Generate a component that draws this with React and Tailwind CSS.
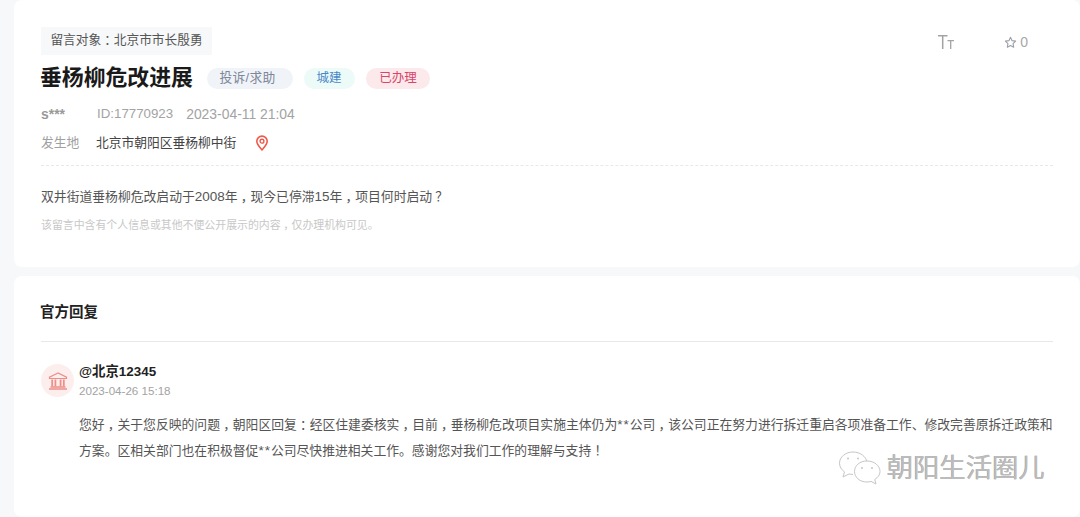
const font = { fontFamily: '"Liberation Sans", "Noto Sans CJK SC", sans-serif' };

function P({ children }) {
  return <span className="inline-block w-[1em] text-center [font-feature-settings:'halt']">{children}</span>;
}

function Wide({ children }) {
  return <span className="text-[13.500px]">{children}</span>;
}

function Stars() {
  return <span className="text-[13.500px] tracking-[1px]">**</span>;
}

function Pin() {
  return (
    <svg width="14" height="16" viewBox="0 0 14 16" fill="none">
      <path d="M7 15C4.2 11.8 1.8 9.3 1.8 6.3a5.2 5.2 0 0 1 10.4 0C12.2 9.3 9.8 11.8 7 15Z" stroke="#ef5a4c" strokeWidth="1.6" strokeLinejoin="round" />
      <circle cx="7" cy="6.2" r="1.9" stroke="#ef5a4c" strokeWidth="1.4" />
    </svg>
  );
}

function Bank() {
  return (
    <svg width="20" height="18" viewBox="0 0 20 18" fill="none">
      <path d="M10 1 1.500 5.200v1.300h17V5.200L10 1Z" stroke="#ec8f88" strokeWidth="1.200" />
      <path d="M4.200 7.500v7M7.400 7.500v7M12.600 7.500v7M15.800 7.500v7" stroke="#ec8f88" strokeWidth="1.800" />
      <path d="M2.500 15h15M1 17h18" stroke="#ec8f88" strokeWidth="1.300" />
    </svg>
  );
}

function TextSize() {
  return (
    <svg width="16" height="14" viewBox="0 0 16 14" fill="none" stroke="#a3a3a3">
      <path d="M0 .8h9.500M4.700.8V14" strokeWidth="1.500" />
      <path d="M9.500 5.700h6.500M12.700 5.700V14" strokeWidth="1.300" />
    </svg>
  );
}

function Wechat() {
  return (
    <svg width="44" height="36" viewBox="0 0 44 36" fill="none" stroke="#c6c6c6" strokeWidth="1">
      <path d="M15 2C7.500 2 1.500 7 1.500 13.200c0 3.600 2 6.600 5 8.700L5 27l6-3c1.200.3 2.400.4 4 .4" fill="#ffffff" />
      <path d="M15 2c7 0 13 4.300 14 10.200" />
      <path d="M29 11c-7.500 0-12.500 4.800-12.500 10.500S21.500 32 29 32c1.500 0 2.700-.2 4-.6l5 2.600-1.300-4.500c3.300-2 5.300-4.800 5.300-8C42 15.800 36.500 11 29 11Z" fill="#ffffff" />
      <circle cx="10" cy="8.500" r="1" fill="#c6c6c6" stroke="none" />
      <circle cx="20" cy="8.500" r="1" fill="#c6c6c6" stroke="none" />
      <circle cx="24" cy="18" r="1" fill="#c6c6c6" stroke="none" />
      <circle cx="34" cy="18" r="1" fill="#c6c6c6" stroke="none" />
    </svg>
  );
}

export default function App() {
  return (
    <div style={font} className="relative h-[517px] w-[1080px] overflow-hidden bg-[#f7f8fa] pl-[14px]">
      <section className="h-[267px] rounded-lg bg-white px-[27px] pt-[27px]">
        <div className="flex items-start justify-between">
          <div className="flex h-[28px] w-[171px] items-center justify-center whitespace-nowrap bg-[#f7f8fa] text-[12.700px] text-[#555555]">留言对象<P>：</P>北京市市长殷勇</div>
          <div className="flex items-center pr-[25px] pt-[7px]">
            <TextSize />
            <span className="ml-[50px] flex items-center gap-[3px] text-[14px] leading-4 text-[#a8a8a8]">
              <svg width="13" height="13" viewBox="0 0 24 24" fill="none" stroke="#9aa0a8" strokeWidth="2" strokeLinejoin="round"><path d="M12 2.500l2.900 6.100 6.600.9-4.800 4.600 1.200 6.600L12 17.500l-5.900 3.200 1.200-6.600L2.500 9.500l6.600-.9L12 2.500Z" /></svg>
              0
            </span>
          </div>
        </div>
        <div className="mt-[7px] flex h-[32px] items-center">
          <h1 className="-ml-[1px] w-[153px] whitespace-nowrap text-[21.850px] font-bold text-[#1a1a1a]">垂杨柳危改进展</h1>
          <span className="ml-[14px] flex h-[21px] w-[86px] items-center justify-center rounded-full bg-[#f0f3f8] pr-[5px] text-[12.750px] tracking-[0.3px] text-[#7d8798]">投诉/求助</span>
          <span className="ml-[11px] flex h-[21px] w-[51px] items-center justify-center rounded-full bg-[#ecfaf8] pr-[1px] text-[12.500px] text-[#4a86c8]">城建</span>
          <span className="ml-[11px] flex h-[21px] w-[64px] items-center justify-center rounded-full bg-[#fbe9ec] text-[12.500px] text-[#d9446a]">已办理</span>
        </div>
        <div className="mt-[10px] flex h-[20px] items-center text-[13.900px] text-[#a3a3a3]">
          <span className="w-[56px] font-bold text-[#999999]">s***</span>
          <span className="text-[13.300px]">ID:17770923</span>
          <span className="ml-[13px]">2023-04-11 21:04</span>
        </div>
        <div className="mt-[9px] flex h-[20px] items-center text-[12.750px]">
          <span className="w-[55px] text-[#a0a0a0]">发生地</span>
          <span className="text-[#444444]">北京市朝阳区垂杨柳中街</span>
          <span className="ml-[19px] flex"><Pin /></span>
        </div>
        <div className="mt-[12px] border-t border-dashed border-[#e6e8eb]" />
        <p className="mt-[21px] text-[12.820px] leading-5 text-[#555555]">双井街道垂杨柳危改启动于<Wide>2008</Wide>年<P>，</P>现今已停滞<Wide>15</Wide>年<P>，</P>项目何时启动<P>？</P></p>
        <p className="mt-[8px] text-[10.900px] leading-5 text-[#c8c8c8]">该留言中含有个人信息或其他不便公开展示的内容<P>，</P>仅办理机构可见。</p>
      </section>

      <section className="mt-[9px] h-[241px] rounded-lg bg-white px-[27px] pt-[24px]">
        <h2 className="-ml-[1px] text-[14.500px] font-bold leading-6 text-[#222222]">官方回复</h2>
        <div className="mt-[17px] border-t border-[#e8e8e8]" />
        <div className="mt-[21px] flex">
          <div className="mt-[1px] flex h-[33px] w-[33px] shrink-0 items-center justify-center rounded-full bg-[#fdeeee]"><Bank /></div>
          <div className="ml-[5px] min-w-0 flex-1">
            <div className="text-[13.400px] font-bold leading-[18px] text-[#222222]">@北京12345</div>
            <div className="mt-[2px] text-[11.600px] leading-4 text-[#a3a3a3]">2023-04-26 15:18</div>
            <div className="mt-[13px] whitespace-nowrap text-[12.820px] leading-[26px] text-[#555555]">
              <p>您好<P>，</P>关于您反映的问题<P>，</P>朝阳区回复<P>：</P>经区住建委核实<P>，</P>目前<P>，</P>垂杨柳危改项目实施主体仍为<Stars />公司<P>，</P>该公司正在努力进行拆迁重启各项准备工作、修改完善原拆迁政策和</p>
              <p>方案。区相关部门也在积极督促<Stars />公司尽快推进相关工作。感谢您对我们工作的理解与支持<P>！</P></p>
            </div>
          </div>
        </div>
      </section>

      <div className="absolute left-[838px] top-[450px] flex items-center gap-[5px]">
        <Wechat />
        <span className="whitespace-nowrap text-[26.300px] leading-9 text-[#bcbcbc] [text-shadow:-0.5px_-0.5px_0_#a0a0a0,1px_1px_0_#ffffff]">朝阳生活圈儿</span>
      </div>
    </div>
  );
}
